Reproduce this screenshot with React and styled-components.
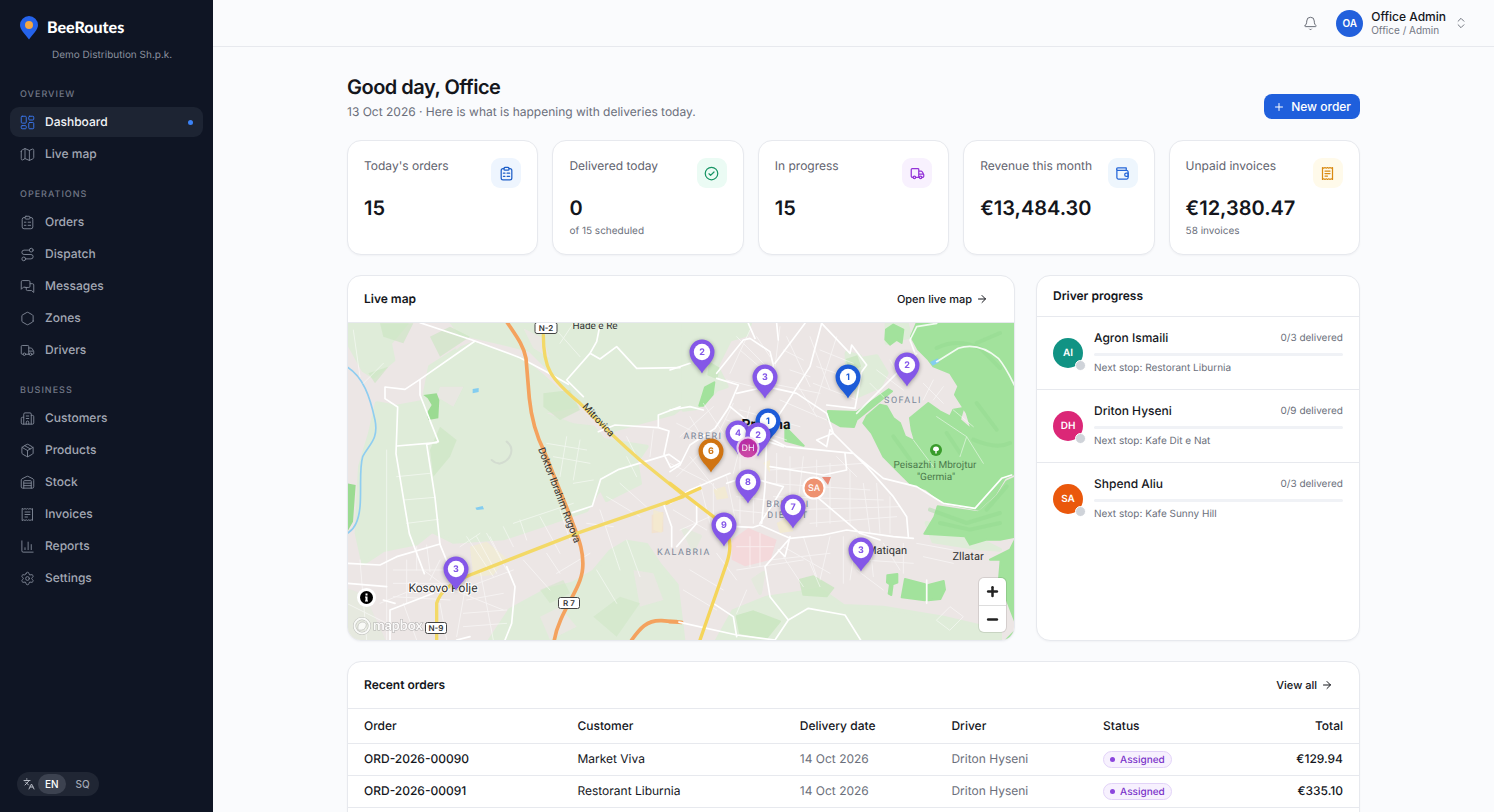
import { Fragment } from "react";
import styled, { createGlobalStyle } from "styled-components";
import {
  Route,
  Hexagon,
  Package,
  Warehouse,
  ChartColumn,
  Settings,
  Building2,
  Languages,
  Bell,
  ChevronsUpDown,
  Plus,
  Minus,
  ArrowRight,
} from "lucide-react";

const GlobalStyle = createGlobalStyle`
  * {
    box-sizing: border-box;
  }
  html {
    scrollbar-width: none;
  }
  body {
    margin: 0;
    background: #fafbfd;
    color: #14161c;
    font-family: Inter, "Liberation Sans", sans-serif;
    font-size: 12px;
    line-height: 16px;
    text-rendering: geometricPrecision;
  }
  button {
    font: inherit;
    border: 0;
    padding: 0;
    cursor: pointer;
  }
  a {
    color: inherit;
    text-decoration: none;
  }
  h1, h2, p {
    margin: 0;
  }
`;

/* ---------- icons ---------- */

const Svg = styled.svg.attrs({ viewBox: "0 0 24 24", fill: "none" })`
  width: ${(props) => props.$size || 15}px;
  height: ${(props) => props.$size || 15}px;
  flex: none;
  stroke: currentColor;
  stroke-width: 1.5;
  stroke-linecap: round;
  stroke-linejoin: round;
`;

const DashboardIcon = (props) => (
  <Svg {...props}>
    <rect x="2" y="2" width="8" height="11" rx="1.5" />
    <rect x="14" y="2" width="8" height="6" rx="1.5" />
    <rect x="2" y="17" width="8" height="5" rx="1.5" />
    <rect x="14" y="12" width="8" height="10" rx="1.5" />
  </Svg>
);

const MapIcon = (props) => (
  <Svg {...props}>
    <path d="M2 7v11.500c0 2 1 2.800 2.600 2L8 18.500l7 3 5-2.300c1.500-.7 2-1.200 2-3V5.500c0-2-1-2.800-2.600-2L15 5.500l-7-3-4.500 2.200C2.300 5.300 2 5.800 2 7z" />
    <path d="M8 2.500v16M15 5.500v16" />
  </Svg>
);

const ClipboardIcon = (props) => (
  <Svg {...props}>
    <path d="M8 4H6.500a3 3 0 0 0-3 3v12a3 3 0 0 0 3 3h11a3 3 0 0 0 3-3V7a3 3 0 0 0-3-3H16" />
    <rect x="8" y="2" width="8" height="4.500" rx="1.500" />
    <path d="M13 11.500h4M13 16.500h4M7 11.500h2.500M7 16.500h2.500" />
  </Svg>
);

const MessagesIcon = (props) => (
  <Svg {...props}>
    <path d="M16 7.500v-3a2 2 0 0 0-2-2H4a2 2 0 0 0-2 2v12l3.500-3.500H8" />
    <path d="M10 13.500v3a2 2 0 0 0 2 2h6.500l3.500 3v-12a2 2 0 0 0-2-2h-4v4a2 2 0 0 1-2 2H8" />
  </Svg>
);

const TruckIcon = (props) => (
  <Svg {...props}>
    <circle cx="7" cy="18" r="2" />
    <circle cx="17" cy="18" r="2" />
    <path d="M5 18H3.500a1.500 1.500 0 0 1-1.500-1.500V5.500A1.500 1.500 0 0 1 3.500 4h9A1.500 1.500 0 0 1 14 5.500V18M9 18h6M14 8h3.500c1 0 1.500.4 2 1.200l2 3.300c.4.600.5 1 .5 1.700v2.300a1.500 1.500 0 0 1-1.500 1.500H19M14.500 13H21" />
  </Svg>
);

const InvoiceIcon = (props) => (
  <Svg {...props}>
    <path d="M4 2.500l2 1 2-1 2 1 2-1 2 1 2-1 2 1 2-1v19l-2-1-2 1-2-1-2 1-2-1-2 1-2-1-2 1z" />
    <path d="M8 8h8M8 12h8M8 16h4" />
  </Svg>
);

const CheckIcon = (props) => (
  <Svg {...props}>
    <circle cx="12" cy="12" r="10" />
    <path d="M8 12.500l2.500 2.500L16 9.500" />
  </Svg>
);

const WalletIcon = (props) => (
  <Svg {...props}>
    <path d="M3 5.500v13A2.500 2.500 0 0 0 5.500 21h13a2.500 2.500 0 0 0 2.500-2.500v-9A2.500 2.500 0 0 0 18.500 7h-14a1.500 1.500 0 0 1 0-4H18v4" />
    <path d="M21 11.500h-3a2.500 2.500 0 0 0 0 5h3z" />
  </Svg>
);

const LogoPin = () => (
  <svg width="18" height="24" viewBox="0 0 18 24">
    <path d="M9 0a9 9 0 0 1 9 9c0 5-5 9-9 14.500C5 18 0 14 0 9a9 9 0 0 1 9-9z" fill="#2563eb" />
    <circle cx="9" cy="9" r="4" fill="#f5a742" />
  </svg>
);

/* ---------- sidebar ---------- */

const Shell = styled.div`
  display: flex;
  align-items: flex-start;
`;

const Sidebar = styled.aside`
  display: flex;
  flex-direction: column;
  position: sticky;
  top: 0;
  flex: none;
  width: 213px;
  height: 100vh;
  padding: 16px 10px;
  background: #0f1524;
`;

const Brand = styled.a`
  display: flex;
  align-items: center;
  gap: 9px;
  padding-left: 10px;
  color: #fff;
  font-family: Lato, sans-serif;
  font-size: 16px;
  font-weight: 900;
  line-height: 24px;
`;

const Company = styled.p`
  padding-left: 42px;
  margin: 7px 0 24px;
  color: #8b919f;
  font-size: 10px;
`;

const NavTitle = styled.h2`
  margin: 0 0 4px;
  padding-left: 10px;
  color: #717786;
  font-size: 9px;
  font-weight: 500;
  letter-spacing: 1px;
  text-transform: uppercase;
`;

const NavList = styled.nav`
  display: flex;
  flex-direction: column;
  gap: 2px;
  margin-bottom: 18px;
`;

const NavItem = styled.a`
  display: flex;
  align-items: center;
  gap: 10px;
  height: 30px;
  padding: 0 10px;
  border-radius: 9px;
  font-weight: 500;
  color: ${(props) => (props.$active ? "#f2f4f8" : "#a3a8b4")};
  background: ${(props) => (props.$active ? "#1d2433" : "transparent")};

  svg {
    color: ${(props) => (props.$active ? "#3b78f0" : "#7f8695")};
  }
`;

const ActiveDot = styled.span`
  width: 5px;
  height: 5px;
  margin-left: auto;
  border-radius: 50%;
  background: #3b82f6;
`;

const LangSwitch = styled.div`
  display: flex;
  align-items: center;
  align-self: flex-start;
  height: 24px;
  margin: auto 0 0 7px;
  padding: 2px 2px 2px 6px;
  border-radius: 12px;
  background: #202634;
  color: #b6bac4;
`;

const LangButton = styled.button`
  height: 20px;
  padding: 0 7px;
  margin-left: 3px;
  border-radius: 10px;
  font-size: 10px;
  font-weight: 500;
  color: ${(props) => (props.$active ? "#fff" : "#a3a8b4")};
  background: ${(props) => (props.$active ? "#3c4250" : "transparent")};
`;

/* ---------- page ---------- */

const Page = styled.div`
  flex: 1;
  min-width: 0;
`;

const TopBar = styled.header`
  display: flex;
  align-items: center;
  justify-content: flex-end;
  gap: 18px;
  height: 47px;
  padding: 0 26px;
  border-bottom: 1px solid #e7e9ee;
`;

const IconButton = styled.button`
  display: flex;
  background: none;
  color: #5f636e;
`;

const UserMenu = styled.button`
  display: flex;
  align-items: center;
  gap: 8px;
  background: none;
  text-align: left;
  color: #5f636e;
`;

const Avatar = styled.span`
  display: flex;
  align-items: center;
  justify-content: center;
  flex: none;
  width: ${(props) => props.$size}px;
  height: ${(props) => props.$size}px;
  border-radius: 50%;
  background: ${(props) => props.$color};
  color: #fff;
  font-size: 10px;
  font-weight: 600;
`;

const UserName = styled.span`
  display: block;
  color: #14161c;
  font-weight: 500;
  line-height: 14px;
`;

const UserRole = styled.span`
  display: block;
  color: #737783;
  font-size: 10px;
  line-height: 13px;
`;

const Content = styled.main`
  display: flex;
  flex-direction: column;
  gap: 20px;
  max-width: 1053px;
  margin: 0 auto;
  padding: 26px 20px;
`;

const PageHead = styled.div`
  display: flex;
  align-items: flex-end;
  justify-content: space-between;
`;

const Title = styled.h1`
  font-size: 20px;
  font-weight: 600;
  line-height: 28px;
  letter-spacing: -0.5px;
`;

const Subtitle = styled.p`
  margin-top: 3px;
  color: #6b6f7b;
`;

const NewOrder = styled.button`
  display: flex;
  align-items: center;
  gap: 6px;
  height: 25px;
  padding: 0 9px;
  margin-bottom: 1px;
  border-radius: 8px;
  background: #1f5fdc;
  color: #fff;
  font-weight: 500;
`;

const Stats = styled.div`
  display: grid;
  grid-template-columns: repeat(5, minmax(0, 1fr));
  gap: 14px;
`;

const Card = styled.section`
  border: 1px solid #e7e9ee;
  border-radius: 14px;
  background: #fff;
  box-shadow: 0 1px 2px rgba(20, 30, 60, 0.04);
  overflow: hidden;
`;

const StatCard = styled(Card)`
  min-height: 115px;
  padding: 17px 16px 15px;
`;

const StatHead = styled.div`
  display: flex;
  align-items: flex-start;
  justify-content: space-between;
  color: #5f636e;
`;

const StatIcon = styled.span`
  display: flex;
  align-items: center;
  justify-content: center;
  width: 30px;
  height: 30px;
  border-radius: 9px;
  color: ${(props) => props.$color};
  background: ${(props) => props.$bg};

  svg {
    stroke-width: 2;
  }
`;

const StatValue = styled.p`
  margin-top: 6px;
  font-size: 20px;
  font-weight: 600;
  line-height: 28px;
`;

const StatNote = styled.p`
  margin-top: 1px;
  color: #6b6f7b;
  font-size: 10px;
`;

const Middle = styled.div`
  display: grid;
  grid-template-columns: minmax(0, 1fr) 324px;
  gap: 21px;
`;

const CardHead = styled.div`
  display: flex;
  align-items: center;
  justify-content: space-between;
  height: ${(props) => (props.$small ? 41 : 47)}px;
  padding: 0 16px;
  border-bottom: 1px solid #e7e9ee;
`;

const CardTitle = styled.h2`
  font-size: 12px;
  font-weight: 600;
`;

const HeadLink = styled.a`
  display: flex;
  align-items: center;
  gap: 4px;
  padding-right: 10px;
  font-size: 11px;
  font-weight: 500;
`;

/* ---------- map ---------- */

const MapArea = styled.div`
  position: relative;
  height: 317px;
`;

const MapSvg = styled.svg`
  display: block;
  width: 100%;
  height: 100%;
`;

const ZoomControl = styled.div`
  position: absolute;
  right: 8px;
  bottom: 8px;
  width: 27px;
  border-radius: 5px;
  background: #fff;
  box-shadow: 0 0 0 1px rgba(0, 0, 0, 0.1);
`;

const ZoomButton = styled.button`
  display: flex;
  align-items: center;
  justify-content: center;
  width: 27px;
  height: 27px;
  background: none;
  color: #222;

  & + & {
    border-top: 1px solid #ddd;
  }
`;

const InfoButton = styled.button`
  position: absolute;
  left: 9px;
  bottom: 33px;
  display: flex;
  align-items: center;
  justify-content: center;
  width: 19px;
  height: 19px;
  border-radius: 50%;
  background: #fff;
`;

const PinGroup = styled.g`
  filter: drop-shadow(0 1px 2px rgba(0, 0, 0, 0.35));
`;

const PURPLE = "#8457e8";
const BLUE = "#1d5bd8";
const ORANGE = "#d07412";

const pins = [
  { x: 354, y: 29, n: 2, color: PURPLE },
  { x: 417, y: 54, n: 3, color: PURPLE },
  { x: 500, y: 54, n: 1, color: BLUE },
  { x: 559, y: 42, n: 2, color: PURPLE },
  { x: 420, y: 98, n: 1, color: BLUE },
  { x: 390, y: 110, n: 4, color: PURPLE },
  { x: 410, y: 112, n: 2, color: PURPLE },
  { x: 363, y: 128, n: 6, color: ORANGE },
  { x: 400, y: 159, n: 8, color: PURPLE },
  { x: 445, y: 184, n: 7, color: PURPLE },
  { x: 376, y: 202, n: 9, color: PURPLE },
  { x: 513, y: 227, n: 3, color: PURPLE },
  { x: 108, y: 246, n: 3, color: PURPLE },
];

const Pin = ({ x, y, n, color }) => (
  <PinGroup transform={`translate(${x} ${y})`}>
    <path d="M0 21.500C-3 15-12.500 9.500-12.500 0a12.500 12.500 0 0 1 25 0C12.500 9.500 3 15 0 21.500z" fill={color} />
    <circle r="8.200" fill="#fff" />
    <text y="3" textAnchor="middle" fontSize="9" fontWeight="700" fill={color}>
      {n}
    </text>
  </PinGroup>
);

const Shield = ({ x, y, w, children }) => (
  <g transform={`translate(${x} ${y})`}>
    <rect x={-w / 2} y="-5.500" width={w} height="11" rx="2" fill="#fff" stroke="#444" />
    <text y="3" textAnchor="middle" fontSize="8" fontWeight="600" fill="#333">
      {children}
    </text>
  </g>
);

// Both halves of the land are drawn at three units to the pixel
const West = () => (
  <g transform="translate(-8 -53) scale(.33333)" fill="none" strokeLinejoin="round" strokeLinecap="round">
    <g fill="#dfecd9" stroke="#dfecd9" strokeWidth="12">
      <path d="M400 160h640v240l-40 30-110 30-70 20-100-90-90-90-60-60-80-20-130-30-30-40z" />
      <path d="M20 160h180l-50 60 10 50-60 50-30-20-50-90z" />
      <path d="M270 290l80-50 50-20 150 50 60 50 100 90 80 100 130 20-20 30-70 50-60 60-30 50-130 45-120 40-150 10-60-30-20-90-20-90 20-90-10-120z" />
      <path d="M110 400l60 10 110-20 10 110-30 20 10 180 10 80-50 40-100 20-60 40-20-90 10-200 30-100z" />
      <path d="M450 1110l60-90 110-60 80-20 60-35 50-60 50-30 60 10 40 60 50 60 20 165zM760 610l130-30 10 60-100 50z" />
      <path d="M20 960l50 20 60 130H20z" opacity=".5" />
    </g>
    <g fill="#ece6e5">
      <path d="M300 350l70 0-30 60-50-30zM330 210l40 10-20 20zM620 430l110-20 60 60-90-10zM550 175l60 30 20 60-50-30z" opacity=".7" />
      <path d="M600 1040l60-30 50 60-80 40zM880 900l60 10 30 80-70 20z" opacity=".7" />
    </g>
    <g fill="#c9e6bf">
      <path d="M120 160h100l-30 60-60-20zM270 200l60-30 60 30-90 60zM300 470l50 40-20 50-50 60-10-80zM610 370l80-10 30 60-60 30-50-40zM85 310l60-20-40 50z" opacity=".6" />
      <path d="M760 1040l80-60 60 20-70 100zM600 960l70-30 20 40-60 30z" opacity=".4" />
    </g>
    <path d="M250 375l40-5 8 20-3 55-30 5-5-20 15-25-12-20zM22 640l25 5-8 110-17 30z" fill="#9bdb92" />
    <path d="M398 357l18-3v12l-18 4zM406 713l22-5 4 10-22 2z" fill="#84cdf0" />
    <path d="M500 515q20 15 12 38t-35 28M455 570q10 10 20 10" stroke="#d3dcd0" strokeWidth="6" />
    <path d="M390 830l50-15 60 50-40 50-60 5z" fill="#f2ecd2" opacity=".7" />
    <path d="M935 735l35-10v60l-35 5z" fill="#f6dfbf" opacity=".6" />
    <path d="M20 290c50 30 70 90 85 160 12 60-20 75-37 110-15 50 5 150-20 200-8 20-20 25-28 32" stroke="#8fcdf0" strokeWidth="5" />
    <g stroke="#fff" strokeWidth="3" opacity=".5">
      <path d="M140 540v570M170 620l100-10M190 690l95-8M200 760l95-12M120 1000l120-50M60 870l20 240M250 900l80 60M300 870l-30 60M230 830v70M260 825l10 80M600 740l60 110M660 720l30 90M780 720l60 180M860 810l40 110M740 760l80 10M800 680l100 60M840 640l90 80M860 560l30 60M700 640l60-10M520 830l-30-60M560 810l-20-60M450 800l40 80M340 960l150 60M380 930l-30 170M420 900l40 210M520 900l-160 60M550 870l80 90M620 850l40 60M750 850l-100 60M770 900l60 100M300 1000l20 110M190 1000l40 110M20 1000l120 60M640 170l80 90M700 160l-40 60M860 500l30 60M940 480l-10 80" />
      <path d="M40 180l20 140M70 340l60-60M380 800l80 120M410 800l60 110M440 790l60 110M200 870v130M160 900h180M160 940h180M160 980l170 10M380 990l110-20M370 1030l130-10M370 1070l130-10M520 760l180-60M420 790l-60 40M620 520l120 20M640 560l110 20M680 500l-20 120M720 510l-20 120" />
    </g>
    <g stroke="#fff" strokeWidth="5">
      <path d="M240 158l165 55 135 50 75 40 70 40M405 213l-165 115-45 30-60-7v35l38 25-5 140 40 240 45 120" />
      <path d="M240 330v45l55 140-35 8 25 160 15 140 45 110M170 528l120-10" />
      <path d="M20 880l100 5 50-25 130-38M150 1110v-90l130-50M165 1000l-35-10" />
      <path d="M20 940l120 10M500 890l25 60-10 110-20 50M350 1110l40-10" />
      <path d="M780 165l-10 50-20 35-70 80 50 50M750 250l30 17 50-37 60 65 130-2M775 485l50-20 130 8 32 10-15 70 20 40 30-15-35-25-150 45-55 30-25 80-60 20M955 470v-35l65-25M970 700l25 70v60" />
    </g>
    <path d="M500 155c30 45 50 70 58 110l10 120c5 50 20 110 45 160l80 200c15 45 40 90 35 150-5 65-70 130-85 215M875 1110c25-35 45-60 90-58l60 5" stroke="#f4a25e" strokeWidth="11" />
    <path d="M610 195c0 100 20 130 110 205 60 60 100 100 180 170l130 105M290 1110v-110c10-35 40-60 100-85l320-125 320-110" stroke="#f3d967" strokeWidth="10" />
  </g>
);

const East = () => (
  <g transform="translate(322 -53) scale(.33333)" fill="none" strokeLinejoin="round" strokeLinecap="round">
    <g transform="translate(-210 159)">
      <g fill="#dfecd9" stroke="#dfecd9" strokeWidth="12">
        <path d="M250 0h200l-10 35-50 15-40 80 30 60-30 10-60 55-40 5z" />
        <path d="M770 110l60-10 30 50-20 40-70 30zM740 90l40 10-10 40-30-10zM860 0h60l10 40-70 20z" />
        <path d="M350 954l50-90 100-40 100-15 60-10 70 50 120 5 180 30 170 40v30zM980 600l120 30 100 50-70-5-130-20z" />
        <path d="M250 620l50 20-20 40zM460 770l30-20-10 60z" opacity=".6" />
      </g>
      <g fill="#c9e6bf" stroke="#c9e6bf" strokeWidth="6">
        <path d="M600 770l40-10 60 35-20 25-70-5zM410 880l50-15 80 30-40 50-80-15zM330 120l25 15-5 30-25-10zM740 110l30-10 10 30-30 10zM470 320l20 30-10 20z" opacity=".8" />
      </g>
      <g fill="#a2e29c" stroke="#a2e29c" strokeWidth="6">
        <path d="M950 0h300v450l-35 15-30 50-50 45-105-20-50-40-50-19-40-40-40-40-35-71-25-30 10-20 40-35 20 5 20 35 20 15 15 40 30 15-10-35-5-35 55-45 35 25 30 15 10-20 30-5-10 35 35 30-15-50-35-55 10-25-25-40-50-20-15-20-30-30-22-40z" />
        <path d="M1250 462v178l-50 10h-40l-50 15-15-25-122-8 30-50 10-32 122 18 55-48 30-45z" />
        <path d="M1250 640l-20 40-60 30 32 0-5 60 50 130zM1215 954l35-35v35z" />
        <path d="M858 20l22-15 30 15-5 40-15-10-20 15-14-15zM684 264l86 3 96-68 10 6-106 85-8 22-40-2-36-20zM298 248l17-55 28-15-5 37-28 33zM556 312l55 56-55-15z" />
        <path d="M862 757l30-4v26l-14 5-4 32-8-4 4-28-9-6zM915 768l60 16v48l-70-9zM985 786l46-12 4 26-14 28-36 4z" />
      </g>
      <path d="M1010 75q60-30 130 0l60 60M1130 60l70-30M1120 350q70 30 110 10M990 560l110 40 100-30M1020 600l90 20 90-20M1130 240l60 80M880 340l50 70M1040 330l40 60M1220 490l-60 70" stroke="#8fd68b" strokeWidth="12" opacity=".35" />
      <path d="M990 117l24-11 4 12-20 10z" fill="#84cdf0" />
      <path d="M395 650l50-35 85 35-18 60-77 20-40-20z" fill="#f4d9db" />
      <path d="M530 600l30-15 20 40-40 5zM340 500l35-10 10 35-35 5zM490 420l20-10v40zM160 560l30 10-5 60-25-10z" fill="#f4ebce" opacity=".8" />
    </g>
    <g stroke="#fff" strokeWidth="3" opacity=".5">
      <path d="M200 200l100 100M240 180l-60 130M330 170l-20 160M170 330l120 30M350 200l70 150M300 340l150 30M420 200l60 160M450 240l100 40M440 290l120 40M430 340l130 50M380 340l60 100M500 200l-70 220M330 390l140 60M190 400l-80 160M210 420l180 50M240 410l-50 200M170 450l180 60M320 550v90M360 560v150M400 560l-20 180M440 570v200M480 580v180M300 600l280-20M300 640l300 20M310 680l330 10M340 720l350-10M420 760l260-20M540 600v160M580 640l20 150M620 640l10 150M660 680v110M500 560l60 60M0 580l120 60M20 620l100-100M60 560l80 100M90 640l30 120M130 640v120M170 620l30 150M10 720l100 60M30 780l90-40M210 560v200M250 600v160M200 680l90 10M190 720l100 10M140 850l60 80M200 900l200-30M300 870l180-20M340 830l140 80M400 800l40 120M480 800l-30 130M520 800v140M560 900l80 60M230 960l-30 70M60 900l100 60M40 960l100 60M640 820l50 80M700 820v90M580 870l150 10M600 340l60 60M620 300l80 60M660 270l40 70M760 340l60 60M790 330l-30 60M820 350l-30 40" />
      <path d="M20 460l120 60M30 500l100-90M60 440l70 120M100 400l60 90M210 240l70 60M260 200l40 60M340 240l60 30M360 300l60 20M240 800v90M200 830h110M270 790v100M340 860l60 90M420 880l30 70M560 800l-20 130M600 820l10 100M740 820l110 20M760 860l90 20M800 1050l40-40 40 30-40 40z" />
      <path d="M800 440l90 60-20 60M730 510l60 80M890 500l50 80M850 420l60 50" />
    </g>
    <g stroke="#fff" strokeWidth="5">
      <path d="M0 300l60-20M140 310l80-100 20-5 60 40 10 40-20 90M235 160l20 45M320 160l5 50M405 160l-90 120M455 160l-35 130-70 110-60 90-5 160-10 110" />
      <path d="M455 160l85 90 5-25 45 60-15 20-20 110-85-10M140 325l65 20-30 70-40 60-75 50-30 60-30 20M0 420l60-10 40 10M200 370l90-20 90 20 90 60 20 60-50 20 30 20 10-50" />
      <path d="M180 410l110 90 60 30 200 20 90 75 100 25 80 50 95 15 80-90 30-10M480 480l110 110 80 90 40 60 5 60" />
      <path d="M340 530l-60-20M300 590l160 25 70-15-5-50M170 640l60-20 110 30-30 50-40 60M0 700l60-40 120-50M270 765l90 40 100-10 70-15 140 20 60 5M440 680l130 110 60 20M200 770l50 2 20-7M360 800l-15 60-20-20M355 810l-70 80 15 90 55 70-40 60M20 1055l180 40 115 15 40-60 60-35 110 20 50 80M130 1000l60 40 10 60M80 700v60l-60 70" />
      <path d="M735 250l-15-40 20-40 60-10M740 250l-180 180M800 275l65-40q60-20 120 30 25 30 60 105M770 930v70" opacity=".85" />
    </g>
    <path d="M0 640l130 100c50 40 60 80 40 140l-80 230M-10 700l100-45" stroke="#f5d55a" strokeWidth="10" />
    <path d="M0 1055h20" stroke="#f4a25e" strokeWidth="11" />
  </g>
);

const LiveMap = () => (
  <MapSvg viewBox="0 0 666 317" preserveAspectRatio="xMidYMid slice" role="img" aria-label="Live map">
    <rect width="667" height="317" fill="#ece6e5" />
    <West />
    <East />

    <g fontFamily="Roboto, sans-serif" fontSize="11" fill="#333">
      <text x="247" y="6" textAnchor="middle" fontSize="10">Hade e Re</text>
      <text x="95" y="269" textAnchor="middle" fontSize="12" stroke="#fff" strokeWidth="2" paintOrder="stroke">Kosovo Polje</text>
      <text x="539" y="231" textAnchor="middle">Matiqan</text>
      <text x="620" y="237" textAnchor="middle">Zllatar</text>
      <text x="418" y="106" textAnchor="middle" fontSize="14" fontWeight="700" fill="#111">Pristina</text>
      <g fill="#7b8799" fontSize="9" letterSpacing="1.500" textAnchor="middle">
        <text x="355" y="116">ARBERI</text>
        <text x="555" y="80">SOFALI</text>
        <text x="336" y="232">KALABRIA</text>
        <text x="440" y="184">BREGU I</text>
        <text x="440" y="195">DIELLIT</text>
      </g>
      <g fill="#4d7a4d" fontSize="10" textAnchor="middle">
        <text x="587" y="145">Peisazhi i Mbrojtur</text>
        <text x="588" y="157">"Germia"</text>
      </g>
      <text fontSize="10" transform="translate(234 84) rotate(47)">Mitrovica</text>
      <text fontSize="10" transform="translate(190 126) rotate(69)">Doktor Ibrahim Rugova</text>
    </g>

    <g transform="translate(588 127)">
      <circle r="6" fill="#3a9c2c" />
      <path d="M-3-.5a3 3 0 1 1 6 0C3 1 1 1 .7 1v2.500H-.7V1C-1 1-3 1-3-.5z" fill="#fff" />
    </g>

    <Shield x={198} y={5} w={22}>N-2</Shield>
    <Shield x={221} y={280} w={21}>R 7</Shield>
    <Shield x={88} y={305} w={21}>N-9</Shield>

    <g opacity=".75">
      <circle cx="14" cy="303" r="7.500" fill="none" stroke="#aaa" strokeWidth="3" />
      <circle cx="14" cy="303" r="7.500" fill="none" stroke="#fff" strokeWidth="2" />
      <path d="M10 307q-1-7 4-8 5 0 4 4-1 5-8 4z" fill="#fff" stroke="#aaa" strokeWidth=".6" />
      <text x="25" y="307" fontFamily="Lato, sans-serif" fontSize="14" fontWeight="700" fill="#fff" stroke="#999" strokeWidth="1" paintOrder="stroke">mapbox</text>
    </g>

    {pins.map((pin) => (
      <Pin key={`${pin.x}-${pin.y}`} {...pin} />
    ))}

    <g fontSize="9" textAnchor="middle" fill="#fff">
      <g opacity=".85">
        <circle cx="400" cy="125" r="10.500" fill="#c4289c" stroke="#f3dcec" strokeWidth="2" />
        <text x="400" y="128">DH</text>
      </g>
      <path d="M474 154l9 0-3 8z" fill="#e98a75" />
      <circle cx="466" cy="165" r="10.500" fill="#ee9270" stroke="#fff" strokeWidth="2" />
      <text x="466" y="168" fontWeight="500">SA</text>
    </g>
  </MapSvg>
);

/* ---------- drivers ---------- */

const DriverRow = styled.div`
  display: flex;
  align-items: center;
  gap: 11px;
  padding: 13px 16px;

  & + & {
    border-top: 1px solid #e7e9ee;
  }
`;

const AvatarWrap = styled.div`
  position: relative;
`;

const StatusDot = styled.span`
  position: absolute;
  right: -3px;
  bottom: -3px;
  width: 11px;
  height: 11px;
  border: 1px solid #fff;
  border-radius: 50%;
  background: #cfd3d9;
`;

const DriverInfo = styled.div`
  flex: 1;
  min-width: 0;
`;

const DriverLine = styled.div`
  display: flex;
  justify-content: space-between;
  font-weight: 500;
`;

const Muted = styled.span`
  display: block;
  color: #6b6f7b;
  font-size: 10px;
  font-weight: 400;
`;

const Track = styled.div`
  height: 3px;
  margin: 7px 0 4px;
  border-radius: 2px;
  background: #f0f2f6;
`;

/* ---------- orders ---------- */

const Table = styled.table`
  width: 100%;
  margin-bottom: 32px;
  border-collapse: collapse;
  table-layout: fixed;
`;

const Th = styled.th`
  width: ${(props) => props.$width};
  height: 34px;
  padding: 0 7px;
  border-bottom: 1px solid #e7e9ee;
  font-weight: 500;
  text-align: ${(props) => (props.$right ? "right" : "left")};

  &:first-child {
    padding-left: 16px;
  }
  &:last-child {
    padding-right: 16px;
  }
`;

const Td = styled(Th).attrs({ as: "td" })`
  height: 32px;
  color: ${(props) => (props.$muted ? "#6b6f7b" : "#14161c")};
  font-weight: ${(props) => (props.$bold ? 500 : 400)};
`;

const Badge = styled.span`
  display: inline-flex;
  align-items: center;
  gap: 5px;
  height: 17px;
  padding: 0 6px;
  border: 1px solid #e2d3f8;
  border-radius: 9px;
  background: #f7f1fe;
  color: #7a33c9;
  font-size: 10px;
  font-weight: 500;

  &::before {
    content: "";
    width: 5px;
    height: 5px;
    border-radius: 50%;
    background: #8b45dd;
  }
`;

const line = { size: 15, strokeWidth: 1.5 };

const nav = [
  {
    title: "Overview",
    items: [
      { label: "Dashboard", icon: <DashboardIcon />, active: true },
      { label: "Live map", icon: <MapIcon /> },
    ],
  },
  {
    title: "Operations",
    items: [
      { label: "Orders", icon: <ClipboardIcon /> },
      { label: "Dispatch", icon: <Route {...line} /> },
      { label: "Messages", icon: <MessagesIcon /> },
      { label: "Zones", icon: <Hexagon {...line} /> },
      { label: "Drivers", icon: <TruckIcon /> },
    ],
  },
  {
    title: "Business",
    items: [
      { label: "Customers", icon: <Building2 {...line} /> },
      { label: "Products", icon: <Package {...line} /> },
      { label: "Stock", icon: <Warehouse {...line} /> },
      { label: "Invoices", icon: <InvoiceIcon /> },
      { label: "Reports", icon: <ChartColumn {...line} /> },
      { label: "Settings", icon: <Settings {...line} /> },
    ],
  },
];

const stats = [
  { label: "Today's orders", value: "15", icon: <ClipboardIcon />, color: "#1f5fc8", bg: "#eef5fe" },
  { label: "Delivered today", value: "0", note: "of 15 scheduled", icon: <CheckIcon />, color: "#189565", bg: "#ebfbf4" },
  { label: "In progress", value: "15", icon: <TruckIcon />, color: "#9333d8", bg: "#f8f1fe" },
  { label: "Revenue this month", value: "€13,484.30", icon: <WalletIcon />, color: "#2566d8", bg: "#eef6fd" },
  { label: "Unpaid invoices", value: "€12,380.47", note: "58 invoices", icon: <InvoiceIcon />, color: "#d98a12", bg: "#fffaea" },
];

const drivers = [
  { initials: "AI", name: "Agron Ismaili", done: "0/3", next: "Restorant Liburnia", color: "#119384" },
  { initials: "DH", name: "Driton Hyseni", done: "0/9", next: "Kafe Dit e Nat", color: "#db2777" },
  { initials: "SA", name: "Shpend Aliu", done: "0/3", next: "Kafe Sunny Hill", color: "#ea580c" },
];

const orders = [
  { id: "ORD-2026-00090", customer: "Market Viva", date: "14 Oct 2026", driver: "Driton Hyseni", total: "€129.94" },
  { id: "ORD-2026-00091", customer: "Restorant Liburnia", date: "14 Oct 2026", driver: "Driton Hyseni", total: "€335.10" },
];

function App() {
  return (
    <Shell>
      <GlobalStyle />
      <Sidebar>
        <Brand href="#">
          <LogoPin />
          BeeRoutes
        </Brand>
        <Company>Demo Distribution Sh.p.k.</Company>
        {nav.map((group) => (
          <Fragment key={group.title}>
            <NavTitle>{group.title}</NavTitle>
            <NavList aria-label={group.title}>
              {group.items.map((item) => (
                <NavItem key={item.label} href="#" $active={item.active}>
                  {item.icon}
                  {item.label}
                  {item.active && <ActiveDot />}
                </NavItem>
              ))}
            </NavList>
          </Fragment>
        ))}
        <LangSwitch>
          <Languages size={12} strokeWidth={2} />
          <LangButton $active>EN</LangButton>
          <LangButton>SQ</LangButton>
        </LangSwitch>
      </Sidebar>

      <Page>
        <TopBar>
          <IconButton aria-label="Notifications">
            <Bell size={15} strokeWidth={1.5} />
          </IconButton>
          <UserMenu>
            <Avatar $size={27} $color="#2260dc">OA</Avatar>
            <span>
              <UserName>Office Admin</UserName>
              <UserRole>Office / Admin</UserRole>
            </span>
            <ChevronsUpDown size={14} strokeWidth={1.5} />
          </UserMenu>
        </TopBar>

        <Content>
          <PageHead>
            <div>
              <Title>Good day, Office</Title>
              <Subtitle>13 Oct 2026 · Here is what is happening with deliveries today.</Subtitle>
            </div>
            <NewOrder>
              <Plus size={12} strokeWidth={2} />
              New order
            </NewOrder>
          </PageHead>

          <Stats>
            {stats.map((stat) => (
              <StatCard key={stat.label}>
                <StatHead>
                  {stat.label}
                  <StatIcon $color={stat.color} $bg={stat.bg}>{stat.icon}</StatIcon>
                </StatHead>
                <StatValue>{stat.value}</StatValue>
                {stat.note && <StatNote>{stat.note}</StatNote>}
              </StatCard>
            ))}
          </Stats>

          <Middle>
            <Card>
              <CardHead>
                <CardTitle>Live map</CardTitle>
                <HeadLink href="#">
                  Open live map
                  <ArrowRight size={12} />
                </HeadLink>
              </CardHead>
              <MapArea>
                <LiveMap />
                <InfoButton aria-label="Map information">
                  <svg width="13" height="13" viewBox="0 0 13 13">
                    <circle cx="6.5" cy="6.5" r="6.5" fill="#000" />
                    <path d="M5.500 2.500h2v2h-2zM5 5.500h2.500v4H8v1H5v-1h.5v-3H5z" fill="#fff" />
                  </svg>
                </InfoButton>
                <ZoomControl>
                  <ZoomButton aria-label="Zoom in">
                    <Plus size={15} strokeWidth={4} />
                  </ZoomButton>
                  <ZoomButton aria-label="Zoom out">
                    <Minus size={15} strokeWidth={4} />
                  </ZoomButton>
                </ZoomControl>
              </MapArea>
            </Card>

            <Card>
              <CardHead $small>
                <CardTitle>Driver progress</CardTitle>
              </CardHead>
              {drivers.map((driver) => (
                <DriverRow key={driver.name}>
                  <AvatarWrap>
                    <Avatar $size={30} $color={driver.color}>{driver.initials}</Avatar>
                    <StatusDot />
                  </AvatarWrap>
                  <DriverInfo>
                    <DriverLine>
                      {driver.name}
                      <Muted>{driver.done} delivered</Muted>
                    </DriverLine>
                    <Track />
                    <Muted>Next stop: {driver.next}</Muted>
                  </DriverInfo>
                </DriverRow>
              ))}
            </Card>
          </Middle>

          <Card>
            <CardHead>
              <CardTitle>Recent orders</CardTitle>
              <HeadLink href="#">
                View all
                <ArrowRight size={12} />
              </HeadLink>
            </CardHead>
            <Table>
              <thead>
                <tr>
                  <Th $width="22%">Order</Th>
                  <Th $width="22%">Customer</Th>
                  <Th $width="15%">Delivery date</Th>
                  <Th $width="15%">Driver</Th>
                  <Th $width="13%">Status</Th>
                  <Th $width="13%" $right>Total</Th>
                </tr>
              </thead>
              <tbody>
                {orders.map((order) => (
                  <tr key={order.id}>
                    <Td $bold>{order.id}</Td>
                    <Td>{order.customer}</Td>
                    <Td $muted>{order.date}</Td>
                    <Td $muted>{order.driver}</Td>
                    <Td>
                      <Badge>Assigned</Badge>
                    </Td>
                    <Td $bold $right>{order.total}</Td>
                  </tr>
                ))}
              </tbody>
            </Table>
          </Card>
        </Content>
      </Page>
    </Shell>
  );
}

export default App;
